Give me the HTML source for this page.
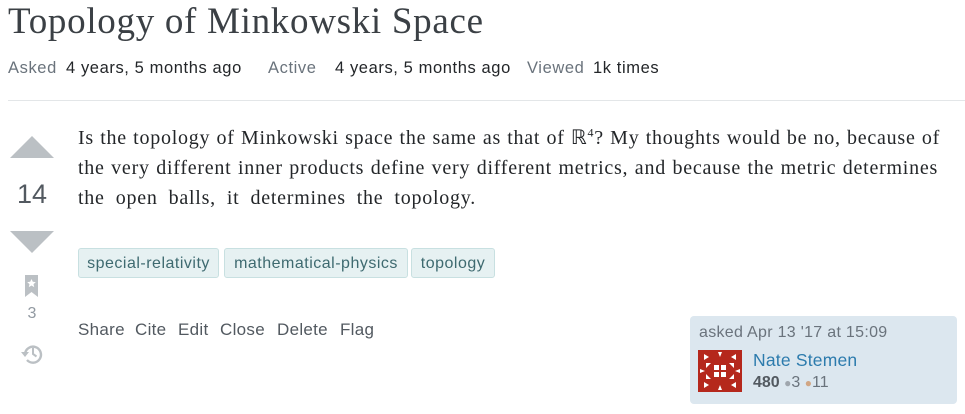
<!DOCTYPE html>
<html><head><style>
body{margin:0;width:965px;height:414px;background:#fff;position:relative;overflow:hidden;font-family:"Liberation Sans",Arial,sans-serif}
.a{position:absolute;white-space:nowrap}
h1{position:absolute;left:8px;top:-2px;margin:0;font:400 37px/48px "Liberation Serif",serif;color:#3b4045;letter-spacing:0.7px;white-space:nowrap}
.m{top:59px;font-size:16.5px;color:#232629;letter-spacing:0.6px}
.g{color:#6a737c}
.ln{position:absolute;left:78px;font:20px/30px "Liberation Serif",serif;color:#232629;letter-spacing:0.75px;white-space:nowrap;text-align:justify;text-align-last:justify}
.tag{position:absolute;top:248px;height:30px;line-height:29px;background:#e6f1f2;border:1px solid #c8e0e1;border-radius:3px;color:#3e6a70;font-size:16px;letter-spacing:0.5px;text-align:center;box-sizing:border-box}
.act{top:320px;font-size:17px;color:#525960;letter-spacing:0.3px}
.card{position:absolute;left:690px;top:316px;width:267px;height:88px;background:#dce7ef;border-radius:4px}
</style></head><body>
<h1>Topology of Minkowski Space</h1>
<div class="a m g" style="left:8px">Asked</div>
<div class="a m" style="left:66px">4 years, 5 months ago</div>
<div class="a m g" style="left:268px">Active</div>
<div class="a m" style="left:335px">4 years, 5 months ago</div>
<div class="a m g" style="left:527px">Viewed</div>
<div class="a m" style="left:593px">1k times</div>
<div class="a" style="left:8px;top:100px;width:957px;height:1px;background:#e3e6e8"></div>
<svg class="a" style="left:0;top:130px" width="70" height="260">
<path d="M10 28 L32 6 L54 28Z" fill="#bbc0c4"/>
<path d="M10 101 L54 101 L32 123Z" fill="#bbc0c4"/>
<path d="M25 145 h13 v22 l-6.5 -5 l-6.5 5Z" fill="#bbc0c4"/>
<path d="M31.5 149 l1.3 2.8 3 .3 -2.3 2 .7 3 -2.7-1.6 -2.7 1.6 .7-3 -2.3-2 3-.3Z" fill="#fff"/>
<path d="M25 224 A8 8 0 1 1 27 230" fill="none" stroke="#bbc0c4" stroke-width="2.4"/>
<path d="M21 222 L25 227 L29 222Z" fill="#bbc0c4"/>
<path d="M33 218 v6 l3.5 2.5" fill="none" stroke="#bbc0c4" stroke-width="2"/>
</svg>
<div class="a" style="left:0;width:64px;text-align:center;top:179px;font-size:27px;color:#525960">14</div>
<div class="a" style="left:0;width:64px;text-align:center;top:305px;font-size:16px;color:#9199a1">3</div>
<div class="ln" style="top:123px;width:862px">Is the topology of Minkowski space the same as that of ℝ<sup style="font-size:12px;line-height:0">4</sup>? My thoughts would be no, because of</div>
<div class="ln" style="top:153px;width:860px">the very different inner products define very different metrics, and because the metric determines</div>
<div class="ln" style="top:183px;width:398px">the open balls, it determines the topology.</div>
<div class="tag" style="left:78px;width:141px">special-relativity</div>
<div class="tag" style="left:224px;width:184px">mathematical-physics</div>
<div class="tag" style="left:411px;width:84px">topology</div>
<div class="a act" style="left:78px">Share</div>
<div class="a act" style="left:135px">Cite</div>
<div class="a act" style="left:178px">Edit</div>
<div class="a act" style="left:220px">Close</div>
<div class="a act" style="left:277px">Delete</div>
<div class="a act" style="left:340px">Flag</div>
<div class="card"></div>
<div class="a" style="left:699px;top:324px;font-size:16px;color:#6a737c;letter-spacing:0.3px">asked Apr 13 '17 at 15:09</div>
<svg class="a" style="left:698px;top:350px" width="44" height="42">
<rect width="44" height="42" fill="#b5281c"/>
<g fill="#fff">
<rect x="16" y="15" width="5" height="5"/><rect x="23" y="15" width="5" height="5"/><rect x="16" y="22" width="5" height="5"/><rect x="23" y="22" width="5" height="5"/>
<path d="M8 13 l5 0 -5 5Z M36 13 l-5 0 5 5Z M8 29 l5 0 -5 -5Z M36 29 l-5 0 5 -5Z"/>
<path d="M20 2 l4 0 -2 5Z M20 40 l4 0 -2 -5Z M2 19 l0 4 5 -2Z M42 19 l0 4 -5 -2Z"/>
<path d="M6 4 l5 3 -5 3Z M38 4 l-5 3 5 3Z M6 38 l5 -3 -5 -3Z M38 38 l-5 -3 5 -3Z"/>
</g></svg>
<div class="a" style="left:753px;top:350px;font-size:17.5px;color:#2c7bad;letter-spacing:0.2px">Nate Stemen</div>
<div class="a" style="left:753px;top:374px;font-size:16px;color:#6a737c"><b style="color:#525960">480</b> <span style="color:#9fa6ad;font-size:12px">●</span>3 <span style="color:#d1a684;font-size:12px">●</span>11</div>
</body></html>
